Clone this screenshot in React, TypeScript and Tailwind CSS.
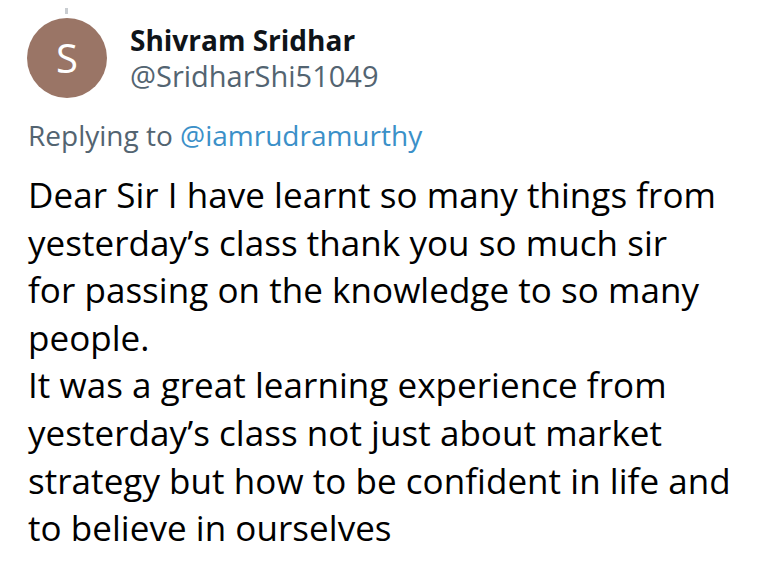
export default function App() {
  const lines = [
    "Dear Sir I have learnt so many things from",
    "yesterday\u2019s class thank you so much sir",
    "for passing on the knowledge to so many",
    "people.",
    "It was a great learning experience from",
    "yesterday\u2019s class not just about market",
    "strategy but how to be confident in life and",
    "to believe in ourselves",
  ];

  return (
    <div className="relative h-[564px] w-[768px] overflow-hidden bg-white font-['Open_Sans',sans-serif] text-[#0f1419]">
      {/* thread connector stub */}
      <div className="absolute left-[65px] top-[8px] h-[6px] w-[3px] bg-[#c9cdd1]" />

      <div className="flex items-center pl-[27px] pt-[18px]">
        <div className="flex h-[80px] w-[80px] shrink-0 items-center justify-center rounded-full bg-[#9a7566] text-[40px] text-white">
          S
        </div>
        <div className="ml-[23px] flex flex-col">
          <span className="text-[28px] leading-[36px] font-bold">Shivram Sridhar</span>
          <span className="text-[29px] leading-[36px] text-[#536471]">@SridharShi51049</span>
        </div>
      </div>

      <div className="mt-[19px] pl-[28px] text-[28px] leading-[36px] text-[#536471]">
        Replying to <span className="text-[#3b90c8]">@iamrudramurthy</span>
      </div>

      <div className="mt-[18px] pl-[28px] text-[35px] leading-[47.6px] tracking-[0.05px] text-black">
        {lines.map((l) => (
          <div key={l} className="whitespace-nowrap">
            {l}
          </div>
        ))}
      </div>
    </div>
  );
}
